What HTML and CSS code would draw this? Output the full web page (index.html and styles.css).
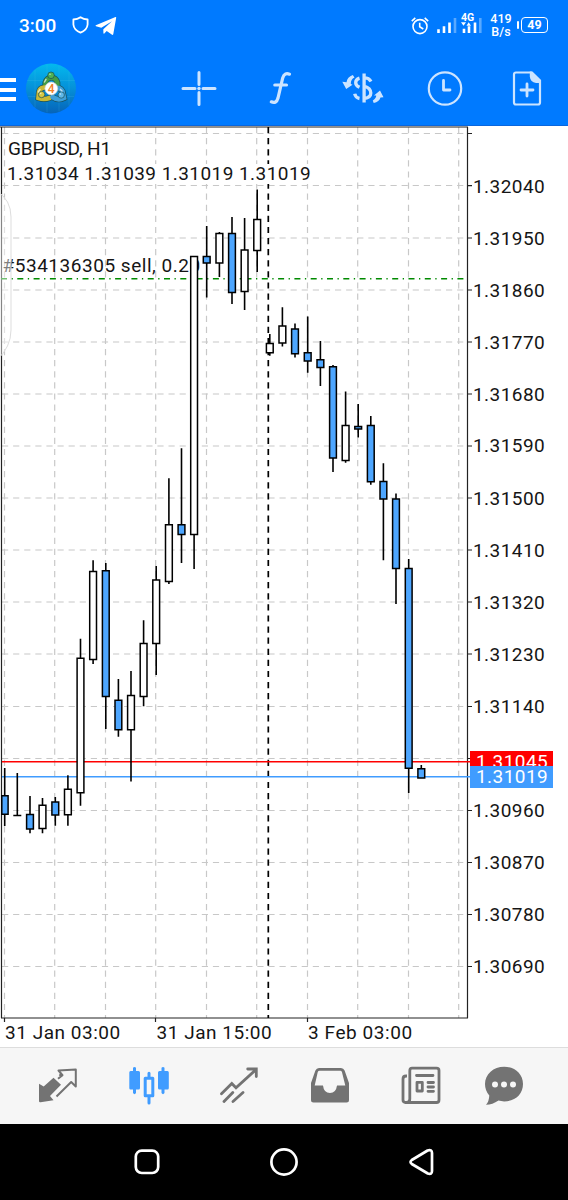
FILE: index.html
```html
<!DOCTYPE html>
<html lang="en">
<head>
<meta charset="utf-8">
<meta name="viewport" content="width=device-width, initial-scale=1">
<title>GBPUSD, H1</title>
<link rel="stylesheet" href="styles.css">
</head>
<body>
<header class="top">
  <div class="status">
    <span class="time">3:00</span>
    <svg class="shield" width="17" height="18" viewBox="0 0 17 18"><path d="M8.500 1.200Q11.500 3.300 15.600 3.500V8.500Q15.200 13.800 8.500 16.700Q1.800 13.800 1.400 8.500V3.500Q5.500 3.300 8.500 1.200Z"/></svg>
    <svg class="plane" width="22" height="20" viewBox="0 0 22 20"><path d="M.8 9.200 20.500 1Q21.300.8 21.200 1.800L18.300 18Q18 19.400 16.700 18.600L11.700 14.900 9.300 17.400Q8.600 18 8.400 17L8.300 13.200 17 5.200 6.300 11.800 1 10.300Q.1 9.700.8 9.200Z"/></svg>
    <div class="indicators">
      <svg class="alarm" width="18" height="18" viewBox="0 0 18 18"><circle cx="9" cy="9.600" r="7"/><path d="M8.700 5.800V9.700L12.300 12M.8 4.100 4.300.9M17.200 4.100 13.700.9"/></svg>
      <svg class="signal" width="45" height="22" viewBox="0 0 45 22"><path d="M1.500 16.200V20M7 13.200V20M12.500 9.400V20M27 15.700V20M32 13.200V20M38 9.400V20"/><path class="dim" d="M18 5V20M43.300 5V20"/><text x="24" y="8.300">4G</text><path class="arrows" d="M24 9.300H29L26.500 12.700ZM29.500 12.700H34L31.700 9.300Z"/></svg>
      <span class="speed">419<br>B/s</span>
      <span class="battery"><i></i><b>49</b></span>
    </div>
  </div>
  <div class="toolbar">
    <span class="menu"><i></i><i></i><i></i></span>
    <svg class="logo" width="52" height="52" viewBox="0 0 52 52">
      <defs>
        <linearGradient id="sea" x1="0" y1="0" x2="0" y2="1"><stop offset="0" stop-color="#03b9ee"/><stop offset=".5" stop-color="#0590d8"/><stop offset="1" stop-color="#0664b8"/></linearGradient>
      </defs>
      <circle cx="26" cy="26" r="25" fill="url(#sea)"/>
      <path class="mesh" d="M10 7V45M22 2V50M34 3V49M44 9V43M2 18H50M3 34H49"/>
      <g class="outline">
        <path d="M20.500 25V20A6 6 0 0 1 32.300 20V25"/>
        <path d="M23 25.500Q15 23.500 14 30L13.500 35.500Q19 37.500 24.500 35.500"/>
        <path d="M31 25.500Q37 25 38 31L39 35.500Q33 38.500 27.500 34.500"/>
      </g>
      <g class="bodies">
        <path stroke="#439c46" d="M20.500 25V20A6 6 0 0 1 32.300 20V25"/>
        <path stroke="#c9b936" d="M23 25.500Q15 23.500 14 30L13.500 35.500Q19 37.500 24.500 35.500"/>
        <path stroke="#3f9fd8" d="M31 25.500Q37 25 38 31L39 35.500Q33 38.500 27.500 34.500"/>
      </g>
      <g class="people">
        <circle cx="26" cy="12.800" r="3.300" fill="#4fb253"/>
        <circle cx="16.600" cy="32" r="3.200" fill="#d7c843"/>
        <circle cx="36.200" cy="32.500" r="3.200" fill="#61b8e8"/>
        <circle class="badge" cx="26.300" cy="26" r="6.400"/>
      </g>
      <path class="glint" d="M25 11.700h.01M15.700 31h.01M35.300 31.400h.01M19.500 19.500 21 16.800M13.300 29.500 15 26.800M37 28.500 35.500 26.900"/>
      <text x="26.200" y="30.200">4</text>
    </svg>
    <div class="tools">
      <span class="tool"><svg width="36" height="36" viewBox="0 0 36 36"><path class="cross" d="M18 2V14M18 22V34M2 18H14M22 18H34"/><circle class="solid" cx="18" cy="18" r="1.700"/></svg></span>
      <span class="tool"><svg width="24" height="36" viewBox="0 0 24 36"><path class="func" d="M20.500 3.700Q15.500 1.700 13.700 7.500L9 27.500Q7.300 33.600 2.300 31.300M5.800 14.500H17.500"/></svg></span>
      <span class="tool"><svg width="42" height="36" viewBox="0 0 42 36"><path class="dollar" d="M22.100 3V32M22.100 7.200Q27 7.500 29 11M22.100 15.500Q28.800 17.500 28.800 22.500Q28.800 27 22.100 28.200M17.500 7.600Q13.500 8.800 13.700 12.300Q13.800 15 17.500 16.800M12.700 23.300Q13.500 27.300 17.500 28"/><path class="solid" d="M10.800 4.600 12.500 7Q8.700 8.800 8.800 13.500L10.500 14.200 4.200 18.500.3 11.300 4.500 11.700Q5.300 6.500 10.800 4.600ZM31.700 32.600 30.800 30Q34.400 27.500 34.200 25L32 24.900 38 20 41.500 26.800 38.500 27Q37.300 31.300 31.700 32.600Z"/></svg></span>
      <span class="tool"><svg width="36" height="36" viewBox="0 0 36 36"><circle class="line" cx="18" cy="18" r="16.200"/><path class="hands" d="M16.500 10V19.500H23"/></svg></span>
      <span class="tool"><svg width="30" height="36" viewBox="0 0 30 36"><path class="line" d="M4 2H20L28 10V32Q28 34 26 34H4Q2 34 2 32V4Q2 2 4 2Z"/><path class="solid" d="M19.500 1 29 10.500V12.500H24Q18.300 11.500 17.800 6V1Z"/><path class="plus" d="M15 13.500V25.500M9 19.500H21"/></svg></span>
    </div>
  </div>
</header>

<main class="chart">
  <svg width="568" height="921" viewBox="0 126 568 921">
    <path class="grid rows" d="M2 133.500H467M2 185.500H467M2 238H467M2 290H467M2 342H467M2 394H467M2 446H467M2 498H467M2 550H467M2 602H467M2 654H467M2 706.500H467M2 758.500H467M2 810.500H467M2 862.500H467M2 914.500H467M2 966.500H467"/>
    <path class="grid cols" d="M4.500 127V1018M54.700 127V1018M105.500 127V1018M155.700 127V1018M206.500 127V1018M256.700 127V1018M307.500 127V1018M357.700 127V1018M408.500 127V1018M458.700 127V1018"/>
    <path class="frame" d="M0 127H468M1.500 127V1018M467.500 127V1018M1 1018H468"/>
    <path class="frame" d="M467 133.500H472M467 185.700H472M467 238H472M467 290H472M467 342H472M467 394H472M467 446H472M467 498H472M467 550H472M467 602H472M467 654H472M467 706.500H472M467 758.500H472M467 810.500H472M467 862.500H472M467 914.500H472M467 966.500H472M4.500 1018V1022M155.500 1018V1022M307.500 1018V1022"/>
    <path class="divider" d="M268.300 127V1018"/>
    <path class="order" d="M1 278.700H467"/>
    <path class="ask" d="M2 761.700H470"/>
    <path class="bid" d="M2 776.800H470"/>

    <rect class="halo" x="6" y="139" width="107" height="23"/>
    <rect class="halo" x="6" y="164" width="305" height="20"/>
    <text class="label" x="8" y="154.700" textLength="103.500">GBPUSD, H1</text>
    <text class="label" x="7" y="180" textLength="304">1.31034 1.31039 1.31019 1.31019</text>
    <text class="label" x="2.500" y="272.300" textLength="198">#534136305 sell, 0.20</text>

    <path class="wick" d="M4.700 768V826M17.300 773V815.500M30 796V833.300M42.500 798V833.300M55.300 797V825.700M67.900 775.300V825.700M80.500 638.700V805.700M93.100 560.300V664M105.800 563V729M118.400 679V736.700M131 671V781.500M143.600 620.300V706.300M156.200 566V675M168.900 478.300V584M181.500 448.300V563M194.100 256V569M206.700 226V297.500M219.400 232V277M232 217V304M244.600 218V310M257.200 189.500V272M269.800 334V355.700M282.400 307.300V346.500M295 323.500V357.500M307.700 316.500V372.700M320.400 341V386M333 365V472M345.600 391.500V462.700M358.200 404V437.500M370.800 416V484.700M383.400 463.300V560.300M396 493.500V604M408.700 559V793M421.300 765V778M13.300 815.500H21.300"/>
    <path class="body up" d="M39.100 805.300h6.800v23.300h-6.800zM64.500 789.300h6.800v25.500h-6.800zM77.100 658.300h6.800v134.500h-6.800zM89.700 571.600h6.800v87.900h-6.800zM127.600 695.600h6.800v34.200h-6.800zM140.200 643.600h6.800v52.900h-6.800zM152.800 580h6.800v63.500h-6.800zM165.500 524.700h6.800v56.800h-6.800zM190.700 256.600h6.800v277.900h-6.800zM216 233.600h6.800v29.400h-6.800zM241.200 250.100h6.800v41.500h-6.800zM253.800 219.600h6.800v30.900h-6.800zM266.400 343.600h6.800v9.200h-6.800zM279 325.900h6.800v17.100h-6.800zM342.200 425.600h6.800v34.900h-6.800z"/>
    <path class="body down" d="M1.800 795.700h6.300v18.500h-6.300zM26.600 814.600h6.800v14.500h-6.800zM51.900 801.900h6.800v13h-6.800zM102.400 570.700h6.800v125.800h-6.800zM115 700.300h6.800v29.500h-6.800zM178.100 524.700h6.800v9.900h-6.800zM203.300 256.600h6.800v6.500h-6.800zM228.600 233.600h6.800v58.900h-6.800zM291.600 329h6.800v24.800h-6.800zM304.300 352.700h6.800v8.300h-6.800zM317 359.700h6.800v7.700h-6.800zM329.600 366.700h6.800v91.300h-6.800zM354.800 426.600h6.800v2.400h-6.800zM367.400 425.600h6.800v56.100h-6.800zM380 481.600h6.800v17.400h-6.800zM392.600 498.900h6.800v69.600h-6.800zM405.300 568.600h6.800v199.700h-6.800zM417.900 768.700h6.800v9.300h-6.800z"/>

    <g class="label">
      <text x="473" y="192.500" textLength="72">1.32040</text><text x="473" y="244.600" textLength="72">1.31950</text><text x="473" y="296.600" textLength="72">1.31860</text><text x="473" y="348.700" textLength="72">1.31770</text><text x="473" y="400.700" textLength="72">1.31680</text><text x="473" y="452.400" textLength="72">1.31590</text><text x="473" y="504.500" textLength="72">1.31500</text><text x="473" y="556.600" textLength="72">1.31410</text><text x="473" y="608.700" textLength="72">1.31320</text><text x="473" y="660.700" textLength="72">1.31230</text><text x="473" y="712.800" textLength="72">1.31140</text><text x="473" y="817" textLength="72">1.30960</text><text x="473" y="869" textLength="72">1.30870</text><text x="473" y="921" textLength="72">1.30780</text><text x="473" y="973" textLength="72">1.30690</text>
      <text x="5" y="1039" textLength="115.500">31 Jan 03:00</text>
      <text x="156.500" y="1039" textLength="115.500">31 Jan 15:00</text>
      <text x="308" y="1039" textLength="104.500">3 Feb 03:00</text>
    </g>
    <rect class="ask-tag" x="470" y="751" width="83" height="22"/>
    <text class="label tag" x="476" y="768" textLength="72">1.31045</text>
    <rect class="bid-tag" x="470" y="766" width="83" height="22"/>
    <text class="label tag" x="476" y="783.300" textLength="72">1.31019</text>
    <path class="edge" d="M-3 191Q11 200 11 217V330Q11 347 -3 360Z"/>
  </svg>
</main>

<nav class="tabs">
  <span class="tab"><svg width="40" height="40" viewBox="0 0 40 40"><path class="fill" d="M1 17.800 5.700 20.500 15.500 11.700 23 18.700 12 30 15.500 34.300 2.500 36.300Q1 36.500 1 35Z"/><path class="thin" d="M20 12.700 24.500 9.200 20.500 4.500 37.800 3.500V20.500L33.200 16 18.500 30.500M21.300 8.500 24.500 10"/></svg></span>
  <span class="tab active"><svg width="40" height="40" viewBox="0 0 40 40"><path class="fill" d="M1.500 5H4V1.800Q5.500.2 7 1.800V5H9.500Q11 5 11 6.500V22Q11 23.500 9.500 23.500H7V27Q5.500 29.300 4 27V23.500H1.500Q.3 23.500.3 22V6.500Q.3 5 1.500 5ZM30.500 5H32.500V1.800Q34 .2 35.500 1.800V5H38.500Q39.800 5 39.800 6.500V22Q39.800 23.500 38.500 23.500H35.500V27Q34 29.300 32.500 27V23.500H30.500Q29 23.500 29 22V6.500Q29 5 30.500 5Z"/><path class="hollow" d="M16.200 12.200H23.800V29.800H16.200ZM20 7.200V12M20 30V37"/></svg></span>
  <span class="tab"><svg width="40" height="40" viewBox="0 0 40 40"><path class="trend" d="M2.500 27.700 12.800 17.500 17 21.800 37 3.500M28.700 3H37.300V10.500M5 35.500 13.800 26.500M14 35.500 24 26.500"/></svg></span>
  <span class="tab"><svg width="40" height="40" viewBox="0 0 40 40"><path class="fill" fill-rule="evenodd" d="M9 2H31Q33.500 2 34.600 4.500L39 17V34Q39 36.500 36.500 36.500H3.500Q1 36.500 1 34V17L5.400 4.500Q6.500 2 9 2ZM9.500 4.800Q8.200 4.800 7.700 6.200L4.700 19.500H13Q13.800 27 20 27Q26 27 27 19.500H35.300L32 6.200Q31.500 4.800 30.300 4.800Z"/></svg></span>
  <span class="tab"><svg width="40" height="40" viewBox="0 0 40 40"><path class="news" d="M11 2.200H35.500Q38 2.200 38 4.500V34Q38 36.500 35.500 36.500H4.500Q2 36.500 2 34V13Q2 10 5 10H6M8.800 5V33Q8.800 36.500 5.500 36.500M8.800 5Q8.800 2.200 11 2.200"/><path class="news rules" d="M15.500 9.500H32M27 16.500H32.500M27 21H32.500M27 25.300H32.500"/><path class="news" d="M16 16.300H21.300V25H16Z"/></svg></span>
  <span class="tab last"><svg width="40" height="40" viewBox="0 0 40 40"><path class="fill" d="M20.200.7C31 .7 39 8 39 18C39 28.300 31 35.400 20.200 35.400Q17 35.400 14.500 34.600Q8.500 38.800 2 38.800Q5 35.800 5.300 29.500Q1 24.500 1 18C1 8 9.500.7 20.200.7Z"/><path class="dots" d="M11 18.500h.01M20 18.500h.01M29 18.500h.01"/></svg></span>
</nav>
<footer class="system">
  <span class="key"><svg width="30" height="30" viewBox="0 0 30 30"><rect x="3.800" y="3.600" width="22.400" height="22.400" rx="6"/></svg></span>
  <span class="key"><svg width="30" height="30" viewBox="0 0 30 30"><circle cx="15" cy="15" r="12.600"/></svg></span>
  <span class="key"><svg width="30" height="30" viewBox="0 0 30 30"><path d="M5.800 13 21.600 3.500Q26 2 26 6V24Q26 28 21.800 26.500L5.800 17Q3.200 15 5.800 13Z"/></svg></span>
</footer>
</body>
</html>
```
FILE: styles.css
```css
* { box-sizing: border-box; }
body { margin: 0; width: 568px; height: 1200px; overflow: hidden; display: flex; flex-direction: column; background: #fff; font-family: Roboto, "Liberation Sans", sans-serif; }
svg { display: block; flex: none; overflow: visible; }

.top { height: 126px; background: #007aff; border-bottom: 1px solid #0a66dd; }
.status { height: 51px; display: flex; align-items: center; padding-left: 19px; color: #fff; }
.time { width: 53px; font-size: 19px; font-weight: 500; }
.shield { margin-bottom: 1px; }
.shield path { fill: none; stroke: #fff; stroke-width: 1.8; stroke-linejoin: round; }
.plane { margin-left: 6px; fill: #fff; }
.indicators { margin-left: auto; padding-right: 20px; display: flex; align-items: center; }
.alarm { fill: none; stroke: #fff; stroke-width: 1.6; margin-right: 8px; }
.signal { fill: none; stroke: #fff; stroke-width: 2.6; margin-bottom: 6px; transform: translateY(1px); }
.signal .dim { stroke: #59a9ff; }
.signal text { fill: #fff; stroke: none; font-size: 10.500px; font-weight: 700; }
.signal .arrows { fill: #fff; stroke: none; }
.speed { width: 27px; margin: 0 2.500px 0 6px; text-align: center; font-size: 12.500px; line-height: 12.500px; font-weight: 500; letter-spacing: .1px; }
.battery { display: flex; align-items: center; gap: 2px; margin-top: -2px; }
.battery i { width: 2px; height: 8px; background: #fff; border-radius: 1px; }
.battery b { width: 27px; height: 16px; border: 1.500px solid #fff; border-radius: 4px; font-size: 12.500px; line-height: 14px; text-align: center; }

.toolbar { height: 74px; display: flex; align-items: center; }
.menu { width: 16px; display: flex; flex-direction: column; gap: 5.500px; margin-top: 3px; }
.menu i { height: 4px; background: #fff; }
.logo { margin-left: 8.500px; transform: translateY(.5px); }
.mesh { fill: none; stroke: #57c7ee; stroke-opacity: .25; stroke-width: .7; }
.outline { fill: none; stroke: #164e5c; stroke-width: 6; stroke-linecap: round; }
.bodies { fill: none; stroke-width: 4.700; stroke-linecap: round; }
.people { stroke: #174d55; stroke-width: .7; }
.badge { fill: #fff; stroke: #c9d2d2; }
.glint { fill: none; stroke: #fff; stroke-opacity: .65; stroke-width: 1.500; stroke-linecap: round; }
.logo text { fill: #f08028; font-size: 12px; font-weight: 500; text-anchor: middle; }
.tools { margin-left: auto; display: flex; }
.tool { width: 82px; display: flex; justify-content: center; fill: none; stroke: #cce4ff; }
.tool svg { transform: translateY(.5px); }
.cross { stroke-width: 3; stroke-linecap: round; }
.solid { fill: #cce4ff; stroke: none; }
.func { stroke-width: 3.2; stroke-linecap: round; }
.dollar { stroke-width: 3.3; }
.line { stroke-width: 2.2; }
.hands, .plus { stroke-width: 2.8; stroke-linecap: round; stroke-linejoin: round; }

.chart { height: 921px; overflow: hidden; }
.grid { fill: none; stroke: #c8c8c8; stroke-width: 1.200; stroke-dasharray: 6.200 4.900; }
.frame { fill: none; stroke: #222; stroke-width: 1.200; }
.divider { fill: none; stroke: #000; stroke-width: 1.700; stroke-dasharray: 6.200 4.900; }
.order { fill: none; stroke: #008a00; stroke-width: 1.5; stroke-dasharray: 6 4.500 1.300 4.500; }
.ask { stroke: #f00; stroke-width: 1.5; }
.bid { stroke: #409cff; stroke-width: 1.5; }
.wick { fill: none; stroke: #000; stroke-width: 1.600; }
.body { stroke: #000; stroke-width: 1.500; }
.up, .halo { fill: #fff; }
.down { fill: #4da6ff; }
.label { fill: #151515; font-size: 19px; letter-spacing: .3px; }
.tag { fill: #fff; }
.ask-tag { fill: #f00; }
.bid-tag { fill: #409cff; }
.edge { fill: #fff; fill-opacity: .45; stroke: #ddd; stroke-width: 1; }

.tabs { height: 77px; padding-left: 12.500px; display: flex; background: #f6f6f6; border-top: 1px solid #ddd; }
.tab { width: 90.700px; padding-top: 17.500px; display: flex; justify-content: center; color: #737373; }
.last { width: 76.500px; }
.active { color: #409cff; }
.fill { fill: currentColor; }
.thin, .hollow, .trend, .news { fill: none; stroke: currentColor; stroke-width: 2; stroke-linejoin: round; }
.hollow { stroke-width: 3; stroke-linecap: round; }
.trend { stroke-width: 2.8; stroke-linecap: round; stroke-linejoin: miter; }
.news { stroke-width: 2.8; }
.rules { stroke-linecap: round; }
.dots { stroke: #f6f6f6; stroke-width: 6; stroke-linecap: round; }

.system { height: 76px; background: #000; display: flex; justify-content: center; align-items: center; }
.key { width: 137.400px; display: flex; justify-content: center; fill: none; stroke: #fff; stroke-width: 2.700; stroke-linejoin: round; }
```
